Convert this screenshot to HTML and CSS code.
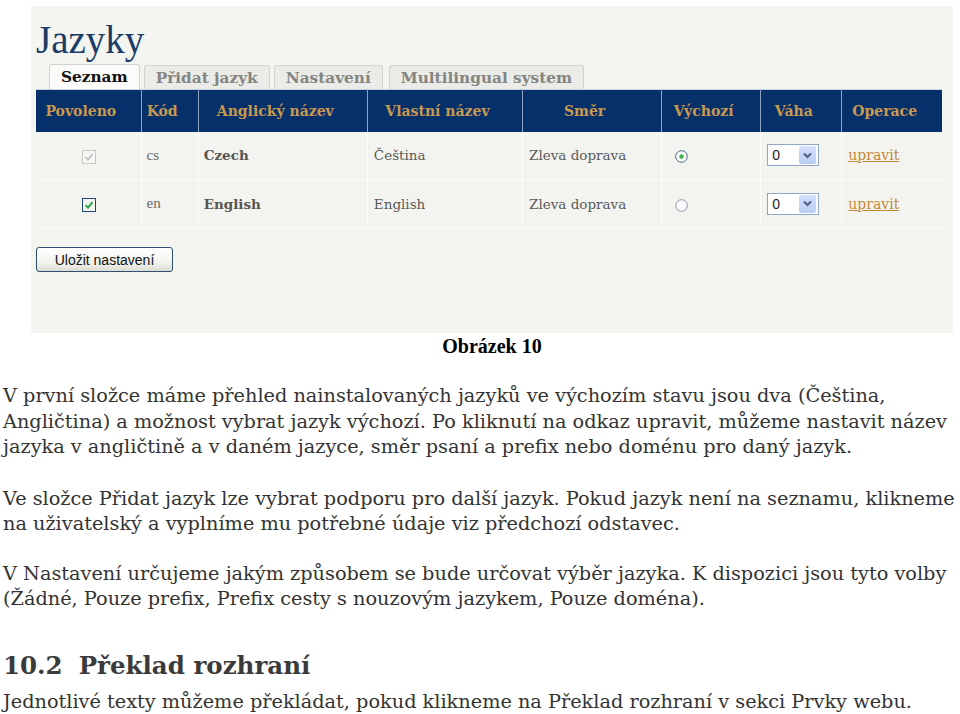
FILE: index.html
```html
<!DOCTYPE html>
<html lang="cs">
<head>
<meta charset="utf-8">
<title>Jazyky</title>
<link rel="stylesheet" href="styles.css">
</head>
<body>
<div class="shot">
  <h1 class="title">Jazyky</h1>
  <ul class="tabs">
    <li class="tab active">Seznam</li>
    <li class="tab t2">Přidat jazyk</li>
    <li class="tab t3">Nastavení</li>
    <li class="tab t4">Multilingual system</li>
  </ul>
  <table class="langs">
    <thead>
      <tr>
        <th class="c1">Povoleno</th>
        <th class="c2">Kód</th>
        <th class="c3">Anglický název</th>
        <th class="c4">Vlastní název</th>
        <th class="c5">Směr</th>
        <th class="c6">Výchozí</th>
        <th class="c7">Váha</th>
        <th class="c8">Operace</th>
      </tr>
    </thead>
    <tbody>
      <tr>
        <td class="center">
          <svg class="chk" width="14" height="14" viewBox="0 0 14 14"><rect x="0.5" y="0.5" width="13" height="13" fill="#f6f6f4" stroke="#c9c9c4"/><path d="M3.5 7.2 L6 9.6 L10.5 4.2" fill="none" stroke="#c4c4c0" stroke-width="1.8"/></svg>
        </td>
        <td class="code">cs</td>
        <td class="en">Czech</td>
        <td>Čeština</td>
        <td>Zleva doprava</td>
        <td class="radio-cell">
          <svg width="13" height="13" viewBox="0 0 13 13"><circle cx="6.5" cy="6.5" r="5.8" fill="#fbfbfb" stroke="#4a6489"/><circle cx="6.5" cy="6.5" r="2.2" fill="#3bb04a"/></svg>
        </td>
        <td>
          <span class="select"><span class="val">0</span><span class="arrow"><svg width="9" height="7" viewBox="0 0 9 7"><path d="M1 1.5 L4.5 5 L8 1.5" fill="none" stroke="#4d6185" stroke-width="2"/></svg></span></span>
        </td>
        <td><a class="edit" href="#">upravit</a></td>
      </tr>
      <tr>
        <td class="center">
          <svg class="chk" width="14" height="14" viewBox="0 0 14 14"><rect x="0.5" y="0.5" width="13" height="13" fill="#f2f2ee" stroke="#1c4a73"/><path d="M3.5 7.2 L6 9.6 L10.5 4.2" fill="none" stroke="#21a33a" stroke-width="1.8"/></svg>
        </td>
        <td class="code">en</td>
        <td class="en">English</td>
        <td>English</td>
        <td>Zleva doprava</td>
        <td class="radio-cell">
          <svg width="13" height="13" viewBox="0 0 13 13"><circle cx="6.5" cy="6.5" r="5.8" fill="#fbfbfb" stroke="#8a97a8"/></svg>
        </td>
        <td>
          <span class="select"><span class="val">0</span><span class="arrow"><svg width="9" height="7" viewBox="0 0 9 7"><path d="M1 1.5 L4.5 5 L8 1.5" fill="none" stroke="#4d6185" stroke-width="2"/></svg></span></span>
        </td>
        <td><a class="edit" href="#">upravit</a></td>
      </tr>
    </tbody>
  </table>
  <button class="save" type="button">Uložit nastavení</button>
</div>

<p class="caption">Obrázek 10</p>

<p class="para p1">V první složce máme přehled nainstalovaných jazyků ve výchozím stavu jsou dva (Čeština,<br>Angličtina) a možnost vybrat jazyk výchozí. Po kliknutí na odkaz upravit, můžeme nastavit název<br>jazyka v angličtině a v daném jazyce, směr psaní a prefix nebo doménu pro daný jazyk.</p>

<p class="para p2">Ve složce Přidat jazyk lze vybrat podporu pro další jazyk. Pokud jazyk není na seznamu, klikneme<br>na uživatelský a vyplníme mu potřebné údaje viz předchozí odstavec.</p>

<p class="para p3">V Nastavení určujeme jakým způsobem se bude určovat výběr jazyka. K dispozici jsou tyto volby<br>(Žádné, Pouze prefix, Prefix cesty s nouzovým jazykem, Pouze doména).</p>

<h2 class="section"><span class="num">10.2</span>Překlad rozhraní</h2>
<p class="para last">Jednotlivé texty můžeme překládat, pokud klikneme na Překlad rozhraní v sekci Prvky webu.</p>
</body>
</html>
```

FILE: styles.css
```css
html, body {
  margin: 0;
  padding: 0;
  background: #ffffff;
}

body {
  font-family: "DejaVu Serif", serif;
  color: #333333;
}

.shot {
  box-sizing: border-box;
  margin: 6px 0 0 31px;
  width: 922px;
  height: 327px;
  padding: 10px 11px 0 5px;
  background: #f4f4f1;
}

.title {
  margin: 0;
  font-family: "Liberation Serif", serif;
  font-weight: normal;
  font-size: 39px;
  line-height: 48px;
  color: #1b3c66;
}

.tabs {
  list-style: none;
  margin: 0;
  padding: 0 0 0 13px;
  display: flex;
  align-items: flex-end;
  height: 25px;
}

.tab {
  box-sizing: border-box;
  height: 24px;
  margin-right: 4px;
  padding: 0 11px;
  background: #ebebe8;
  border: 1px solid #d2d2ce;
  border-bottom: none;
  border-radius: 3px 3px 0 0;
  font-weight: bold;
  font-size: 15.3px;
  line-height: 24px;
  color: #858581;
  white-space: nowrap;
}

.tab.active {
  background: #fbfbfa;
  color: #111111;
  height: 25px;
}

.tab.t3 {
  margin-right: 6px;
}

.langs {
  width: 906px;
  border-collapse: collapse;
  table-layout: fixed;
  font-size: 13.5px;
  color: #5a5a57;
}

.langs th {
  box-sizing: border-box;
  height: 42px;
  padding: 0 15px 0 0;
  background: #06306a;
  color: #c9994f;
  font-weight: bold;
  font-size: 14px;
  text-align: center;
  border-right: 1px solid #8fa4c0;
  border-top: 1px solid #c7d3e0;
  white-space: nowrap;
}

.langs th:last-child {
  border-right: none;
}

.c1 { width: 105px; }
.c2 { width: 57px; }
.c3 { width: 169px; }
.c4 { width: 155px; }
.c5 { width: 139px; }
.c6 { width: 99px; }
.c7 { width: 81px; }
.c8 { width: 100px; }

.langs td {
  box-sizing: border-box;
  height: 48px;
  padding: 0 0 0 6px;
  background: #f3f3f0;
  border-right: 1px solid #fdfdfc;
  border-bottom: 1px solid #fdfdfc;
  vertical-align: middle;
  white-space: nowrap;
}

.langs td:last-child {
  border-right: none;
}

.langs td.center {
  padding: 0;
  text-align: center;
}

.chk {
  display: inline-block;
  vertical-align: middle;
  margin-left: 2px;
}

.langs td.code {
  padding-left: 5px;
  font-family: "Liberation Serif", serif;
  font-size: 15px;
  color: #6a6a66;
}

.langs td.en {
  padding-left: 5px;
  font-weight: bold;
  color: #555552;
}

.radio-cell svg {
  display: inline-block;
  vertical-align: middle;
  margin-left: 7px;
}

.select {
  box-sizing: border-box;
  display: inline-flex;
  align-items: center;
  justify-content: space-between;
  width: 52px;
  height: 22px;
  padding: 1px 2px 1px 4px;
  border: 1px solid #8fa6c6;
  background: #ffffff;
  vertical-align: middle;
  font-family: "Liberation Sans", sans-serif;
  font-size: 14px;
  color: #222222;
}

.select .arrow {
  display: flex;
  align-items: center;
  justify-content: center;
  width: 17px;
  height: 18px;
  background: linear-gradient(#d3e0fb, #b9cdf5);
  border-radius: 2px;
}

.edit {
  font-size: 14px;
  color: #c48a3a;
  text-decoration: underline;
}

.save {
  display: block;
  box-sizing: border-box;
  margin: 19px 0 0 0;
  width: 137px;
  height: 25px;
  padding: 0;
  border: 1px solid #2f4e72;
  border-radius: 3px;
  background: linear-gradient(#ffffff, #f0f0ea 70%, #dcdcd4);
  font-family: "Liberation Sans", sans-serif;
  font-size: 14px;
  color: #111111;
}

.caption {
  margin: 2px 0 0 0;
  padding-left: 24px;
  text-align: center;
  font-family: "Liberation Serif", serif;
  font-weight: bold;
  font-size: 20px;
  line-height: 23px;
  color: #000000;
}

.para {
  margin: 0;
  padding-left: 3px;
  font-size: 19.3px;
  line-height: 25.5px;
  white-space: nowrap;
  color: #333333;
}

.p1 { margin-top: 25px; }
.p2 { margin-top: 26px; }
.p3 { margin-top: 24px; }

.section {
  margin: 39px 0 0 0;
  padding-left: 3px;
  font-size: 24.5px;
  line-height: 30px;
  font-weight: bold;
  color: #3a3a3a;
}

.section .num {
  margin-right: 16px;
}

.para.last {
  margin-top: 8px;
}
```
